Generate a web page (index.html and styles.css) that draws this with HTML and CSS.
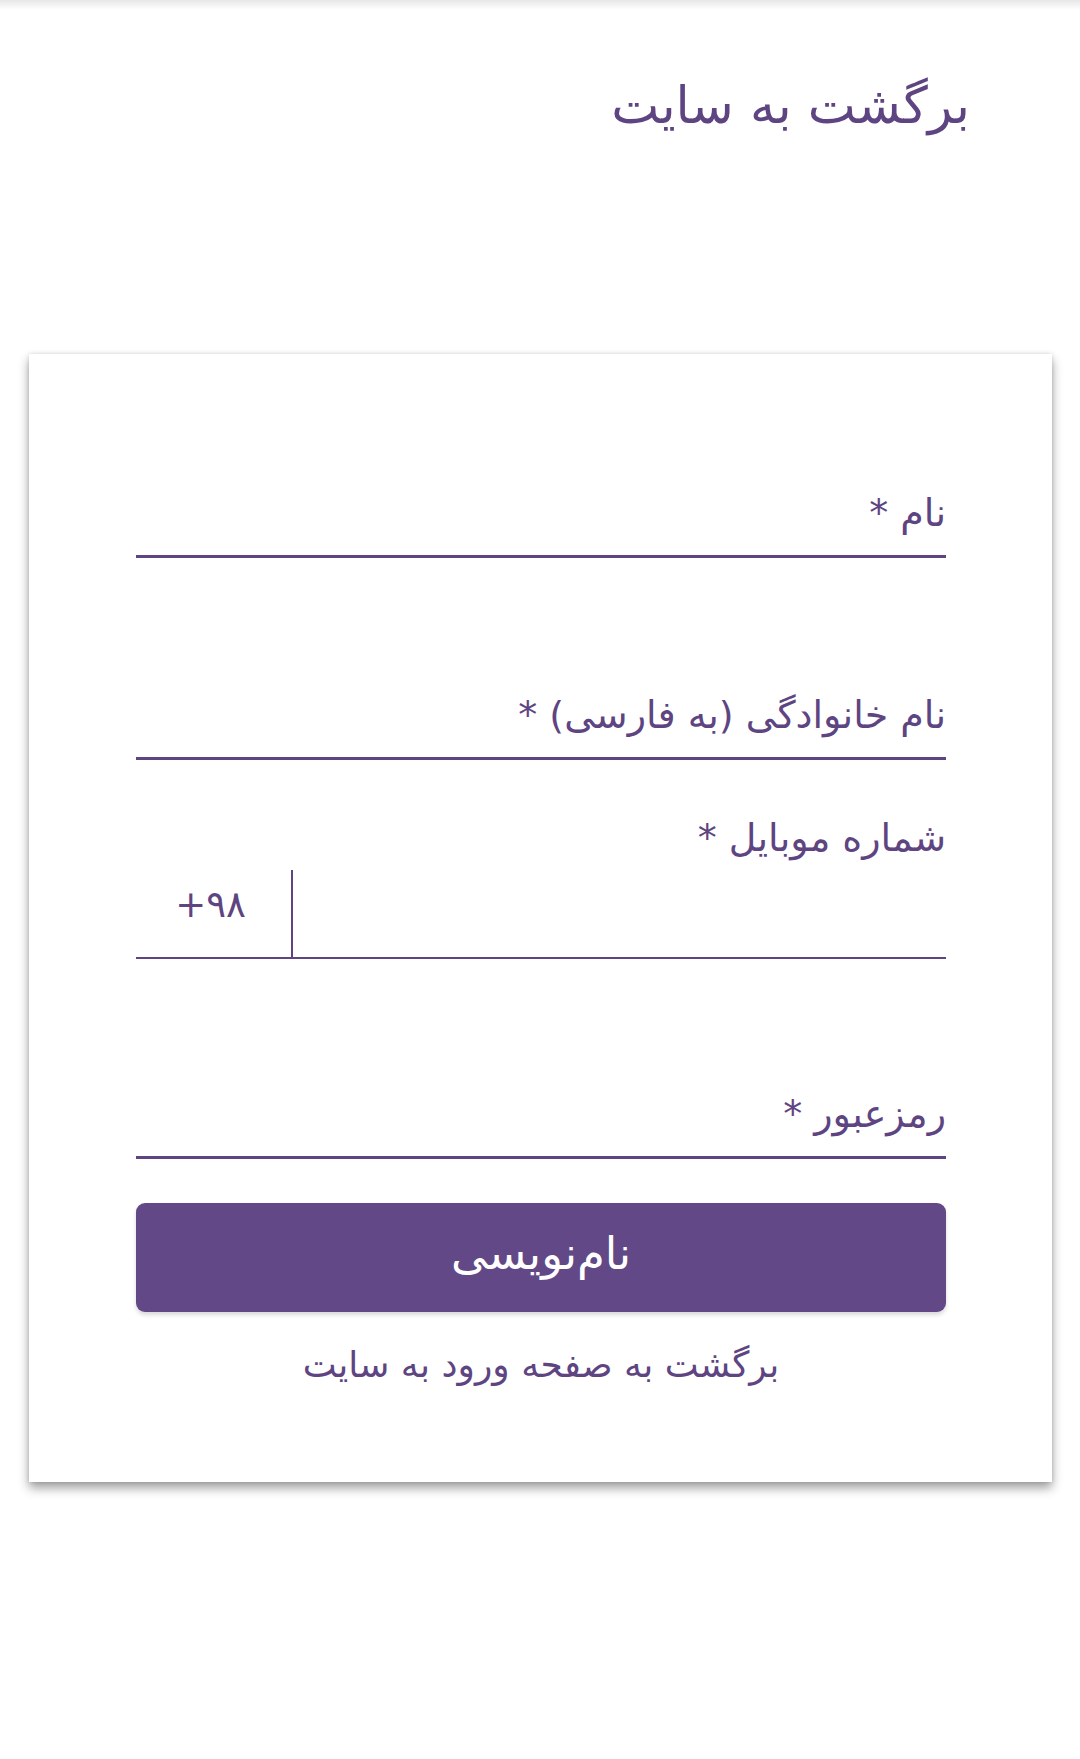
FILE: index.html
```html
<!DOCTYPE html>
<html lang="fa" dir="rtl">
<head>
<meta charset="utf-8">
<title>نام‌نویسی</title>
<link rel="stylesheet" href="styles.css">
</head>
<body>
<div class="topshade"></div>
<header class="header">
  <a class="back" href="#">برگشت به سایت</a>
</header>
<main class="card">
  <div class="field">
    <label class="label">نام *</label>
  </div>
  <div class="field">
    <label class="label">نام خانوادگی (به فارسی) *</label>
  </div>
  <div class="field-phone">
    <label class="label">شماره موبایل *</label>
    <div class="phone-row">
      <div class="phone-input"></div>
      <div class="prefix">+۹۸</div>
    </div>
  </div>
  <div class="field">
    <label class="label">رمزعبور *</label>
  </div>
  <button class="submit">نام‌نویسی</button>
  <a class="login-link" href="#">برگشت به صفحه ورود به سایت</a>
</main>
<div class="page-end"></div>
</body>
</html>
```

FILE: styles.css
```css
html, body {
  margin: 0;
  padding: 0;
  background: #ffffff;
}
body {
  font-family: "DejaVu Sans", sans-serif;
  color: #5e4582;
  direction: rtl;
}
.topshade {
  height: 10px;
  background: linear-gradient(to bottom, #e6e6e6, #ffffff);
}
.header {
  height: 190px;
  padding-right: 110px;
  box-sizing: border-box;
  padding-top: 66px;
}
.back {
  font-size: 51px;
  line-height: 60px;
  color: #5e4582;
  text-decoration: none;
}
.card {
  margin: 154px 28px 0 29px;
  padding: 0 106px 92px 107px;
  background: #ffffff;
  box-shadow: 0 6px 10px rgba(0, 0, 0, 0.38), 0 0 4px rgba(0, 0, 0, 0.12);
  display: flex;
  flex-direction: column;
}
.field {
  height: 204px;
  box-sizing: border-box;
  border-bottom: 3px solid #5e4582;
  display: flex;
  flex-direction: column;
  justify-content: flex-end;
  padding-bottom: 17px;
}
.field + .field, .field-phone + .field {
  height: 202px;
}
.field-phone + .field {
  height: 200px;
}
.label {
  font-size: 38px;
  line-height: 50px;
  color: #5e4582;
}
.field-phone {
  display: flex;
  flex-direction: column;
  padding-top: 53px;
}
.phone-row {
  display: flex;
  flex-direction: row;
  height: 89px;
  margin-top: 7px;
  box-sizing: border-box;
  border-bottom: 2px solid #5e4582;
}
.phone-input {
  flex: 1;
}
.prefix {
  width: 157px;
  box-sizing: border-box;
  border-right: 2px solid #5e4582;
  direction: ltr;
  text-align: center;
  font-size: 37px;
  line-height: 70px;
  padding-right: 6px;
  color: #5e4582;
}
.submit {
  margin-top: 44px;
  height: 109px;
  border: none;
  border-radius: 9px;
  background: #634888;
  color: #ffffff;
  font-family: "DejaVu Sans", sans-serif;
  font-size: 45px;
  box-shadow: 0 3px 4px rgba(0, 0, 0, 0.15);
  padding: 0 0 8px 0;
}
.login-link {
  margin-top: 28px;
  text-align: center;
  font-size: 36px;
  line-height: 50px;
  color: #5e4582;
  text-decoration: none;
}
.page-end {
  height: 200px;
}
```
